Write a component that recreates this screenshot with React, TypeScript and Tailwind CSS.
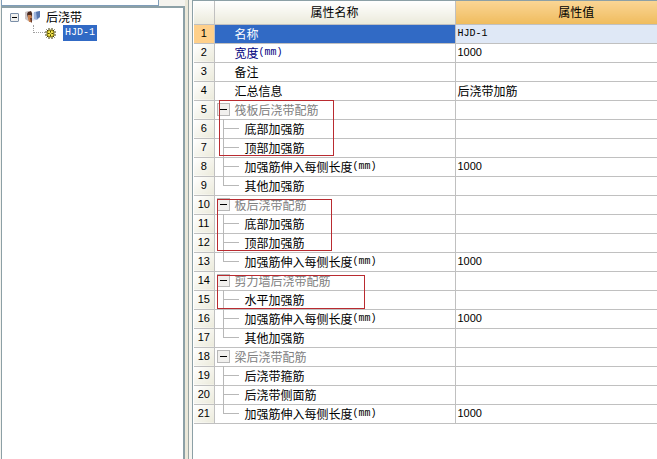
import { useState } from 'react';

type Row = {
  name: string;
  unit?: string;
  value?: string;
  kind?: 'group' | 'child' | 'last';
  frame?: string;
};

const rows: Row[] = [
  { name: '名称', value: 'HJD-1' },
  { name: '宽度', unit: '(mm)', value: '1000' },
  { name: '备注' },
  { name: '汇总信息', value: '后浇带加筋' },
  { name: '筏板后浇带配筋', kind: 'group', frame: 'left-1 -top-px h-14 w-[115px]' },
  { name: '底部加强筋', kind: 'child' },
  { name: '顶部加强筋', kind: 'child' },
  { name: '加强筋伸入每侧长度', unit: '(mm)', value: '1000', kind: 'child' },
  { name: '其他加强筋', kind: 'last' },
  { name: '板后浇带配筋', kind: 'group', frame: 'left-0.5 top-[3px] h-[52px] w-[115px]' },
  { name: '底部加强筋', kind: 'child' },
  { name: '顶部加强筋', kind: 'child' },
  { name: '加强筋伸入每侧长度', unit: '(mm)', value: '1000', kind: 'last' },
  { name: '剪力墙后浇带配筋', kind: 'group', frame: 'left-0.5 top-[3px] h-[34px] w-[148px]' },
  { name: '水平加强筋', kind: 'child' },
  { name: '加强筋伸入每侧长度', unit: '(mm)', value: '1000', kind: 'child' },
  { name: '其他加强筋', kind: 'last' },
  { name: '梁后浇带配筋', kind: 'group' },
  { name: '后浇带箍筋', kind: 'child' },
  { name: '后浇带侧面筋', kind: 'child' },
  { name: '加强筋伸入每侧长度', unit: '(mm)', value: '1000', kind: 'last' },
];

const mono = "font-['Liberation_Mono',monospace] text-[10px]";
const digits = "font-['Liberation_Sans',sans-serif] text-[11px]";

function ComponentIcon() {
  return (
    <svg width="16" height="12" viewBox="0 0 16 12" aria-hidden="true">
      <path d="M0 1l3-1 3 1v8l-3 1-3-2z" fill="#cbc3c4" />
      <path d="M2 3l1-2 3-1 1 2v5H3z" fill="#4a2a20" />
      <path d="M3 4h3l1 2-1 5H4L3 8z" fill="#c98250" />
      <path d="M5 7h2v4l-1 1z" fill="#6b3a28" />
      <path d="M7 2l4-1v8l-4 1z" fill="#dfe4f0" />
      <path d="M9 1l6-1v6l-3 3-3-1z" fill="#9db4dc" />
      <path d="M11 1l4-1v6l-3 2z" fill="#5877ae" />
    </svg>
  );
}

function GearIcon() {
  return (
    <svg width="11" height="11" viewBox="0 0 11 11" aria-hidden="true">
      <path d="M4 0v11M7 0v11M0 4h11M0 7h11M1.5 1.5l8 8M9.5 1.5l-8 8" stroke="#3a3600" />
      <circle cx="5.5" cy="5.5" r="3.5" fill="#f5e74f" stroke="#8a7d10" />
      <path d="M5.5 2.5v6M2.5 5.5h6" stroke="#4a4400" />
      <circle cx="5.5" cy="5.5" r="1" fill="#f5e74f" />
    </svg>
  );
}

function Tree() {
  const [open, setOpen] = useState(true);
  return (
    <nav className="min-h-0 flex-1 border-t-2 border-r-2 border-l border-[#8ca0a6] bg-white pt-px pl-2">
      <div className="flex h-4 items-center">
        <button
          type="button"
          aria-label="后浇带"
          aria-expanded={open}
          onClick={() => setOpen(!open)}
          className="flex size-[9px] items-center justify-center rounded-[1px] border border-[#7b8fa8] bg-[#f0f0ee]"
        >
          <span className="h-px w-[5px] bg-black" />
        </button>
        <span className="ml-1.5">
          <ComponentIcon />
        </span>
        <span className="ml-[5px]">后浇带</span>
      </div>
      {open && (
        <div className="flex h-4 pl-[23px]">
          <span className="h-2 w-3 border-b border-l border-dotted border-[#a0a0a0]" />
          <span className="flex items-center">
            <GearIcon />
          </span>
          <a href="#hjd-1" className={`ml-[7px] flex items-center bg-[#316ac5] px-0.5 text-white ${mono}`}>
            HJD-1
          </a>
        </div>
      )}
    </nav>
  );
}

function NameCell({ row, onToggle }: { row: Row; onToggle: () => void }) {
  if (row.kind === 'group') {
    return (
      <div className="relative flex h-[18px] items-center pl-0.5 text-[#808080]">
        <button
          type="button"
          aria-label={row.name}
          onClick={onToggle}
          className="flex size-[13px] items-center justify-center border border-[#b8b8b8] bg-[#f1f0ee]"
        >
          <span className="h-px w-[7px] bg-black" />
        </button>
        <span className="ml-[5px]">{row.name}</span>
        {row.frame && (
          <span className={`pointer-events-none absolute z-10 border border-[#b92b30] ${row.frame}`} />
        )}
      </div>
    );
  }
  if (row.kind) {
    return (
      <div className="flex h-[18px] items-center pl-2">
        <span className="flex h-[19px] w-4 shrink-0 flex-col">
          <span className="h-2.5 border-b border-l border-[#b8b8b8]" />
          {row.kind === 'child' && <span className="flex-1 border-l border-[#b8b8b8]" />}
        </span>
        <span className="ml-1.5">{row.name}</span>
        {row.unit && <span className={mono}>{row.unit}</span>}
      </div>
    );
  }
  return (
    <div className={`flex h-[18px] items-center pl-5 ${row.unit ? 'text-[#000080]' : ''}`}>
      {row.name}
      {row.unit && <span className={mono}>{row.unit}</span>}
    </div>
  );
}

function PropertyTable() {
  const [closed, setClosed] = useState<number[]>([]);
  let group = -1;

  const toggle = (i: number) =>
    setClosed(closed.includes(i) ? closed.filter((c) => c !== i) : [...closed, i]);

  return (
    <table className="w-full table-fixed border-collapse">
      <colgroup>
        <col className="w-5" />
        <col className="w-[241px]" />
        <col />
      </colgroup>
      <thead>
        <tr className="h-[23px]">
          <th className="border-r border-b border-[#c0c0c0] bg-linear-to-b from-white to-[#ebeadb] p-0" />
          <th className="border-r border-b border-[#c0c0c0] bg-linear-to-b from-white to-[#ebeadb] p-0 font-normal">
            属性名称
          </th>
          <th className="border-b border-[#c0c0c0] bg-linear-to-b from-[#fad594] to-[#efbc5d] p-0 pl-10 font-normal">
            属性值
          </th>
        </tr>
      </thead>
      <tbody>
        {rows.map((row, i) => {
          if (row.kind === 'group') group = i;
          if (row.kind && row.kind !== 'group' && closed.includes(group)) return null;
          const selected = i === 0;
          return (
            <tr key={i}>
              <th
                className={`border-r border-b border-[#c0c0c0] p-0 text-center font-normal ${digits} ${
                  selected ? 'bg-[#ffd08a]' : 'bg-linear-to-br from-white to-[#ebeadb]'
                }`}
              >
                {i + 1}
              </th>
              <td className={`border-r border-b border-[#c0c0c0] p-0 ${selected ? 'bg-[#316ac5] text-white' : ''}`}>
                <NameCell row={row} onToggle={() => toggle(i)} />
              </td>
              <td className={`border-b border-[#c0c0c0] p-0 ${selected ? 'bg-[#dfe8f6]' : ''}`}>
                <div
                  className={`flex h-[18px] items-center pl-0.5 ${
                    row.value === '1000' ? digits : selected ? mono : ''
                  }`}
                >
                  {row.value}
                </div>
              </td>
            </tr>
          );
        })}
      </tbody>
    </table>
  );
}

export default function App() {
  return (
    <main className="flex h-screen overflow-hidden bg-[#ece9d8] font-['Noto_Sans_CJK_SC','Noto_Sans',sans-serif] text-xs text-black">
      <aside className="flex w-[185px] shrink-0 flex-col bg-[#f4f3ee] pl-px">
        <input
          aria-label="搜索"
          className="h-1.5 w-[158px] border-x border-b border-[#7f9db9] bg-white outline-none"
        />
        <Tree />
      </aside>
      <div className="w-1 shrink-0 border-r border-[#9aa6a4] bg-[#ebe8d9]" />
      <div className="w-[3px] shrink-0 bg-[#f6f5f0]" />
      <section className="min-w-0 flex-1 border-t border-l border-[#8ca0a6] bg-white pl-px">
        <PropertyTable />
      </section>
    </main>
  );
}
